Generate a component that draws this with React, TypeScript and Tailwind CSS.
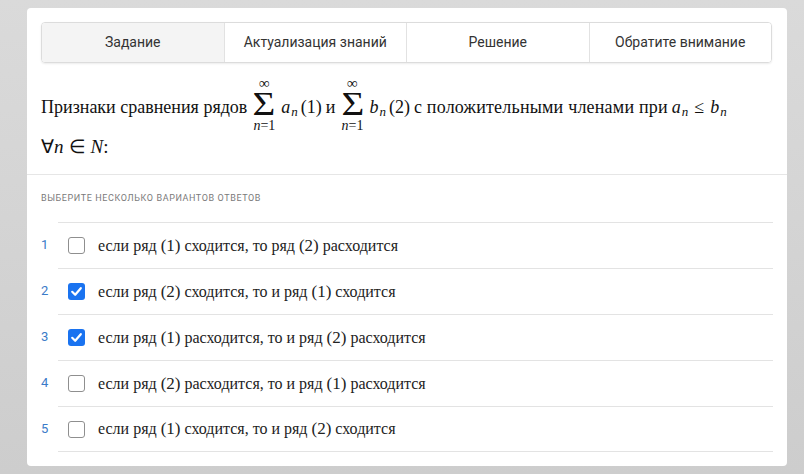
import React from "react";

const serif = { fontFamily: '"Liberation Serif", "Times New Roman", serif' };
const math = { fontFamily: '"Liberation Serif", serif' };
const sans = { fontFamily: 'Roboto, "Open Sans", sans-serif' };

function Sum() {
  return (
    <span className="inline-flex flex-col items-center mx-[2px] text-[#111] w-[30px] mt-[-4px]" style={math}>
      <span className="text-[15px] leading-[13px]">∞</span>
      <span className="text-[34px] leading-[28px] scale-x-[1.15] inline-block">Σ</span>
      <span className="text-[14px] leading-[15px]">
        <span className="italic">n</span>=1
      </span>
    </span>
  );
}

function Sub({ base }: { base: string }) {
  return (
    <span className="text-[18px] italic whitespace-nowrap" style={math}>
      {base}
      <span className="text-[13px] italic relative top-[3px] ml-[1px]">n</span>
    </span>
  );
}

function Check({ checked }: { checked: boolean }) {
  if (checked) {
    return (
      <span className="w-[17px] h-[17px] rounded-[3px] bg-[#1a73f0] flex items-center justify-center shrink-0">
        <svg width="13" height="13" viewBox="0 0 13 13">
          <path d="M2.2 6.8 L5.2 9.8 L10.8 3.2" fill="none" stroke="white" strokeWidth="2.2" strokeLinecap="round" strokeLinejoin="round" />
        </svg>
      </span>
    );
  }
  return <span className="w-[17px] h-[17px] rounded-[3px] border border-[#8f8f8f] bg-white shrink-0" />;
}

const options = [
  { t: ["если ряд ", "(1)", " сходится, то ряд ", "(2)", " расходится"], c: false },
  { t: ["если ряд ", "(2)", " сходится, то и ряд ", "(1)", " сходится"], c: true },
  { t: ["если ряд ", "(1)", " расходится, то и ряд ", "(2)", " расходится"], c: true },
  { t: ["если ряд ", "(2)", " расходится, то и ряд ", "(1)", " расходится"], c: false },
  { t: ["если ряд ", "(1)", " сходится, то и ряд ", "(2)", " сходится"], c: false },
];

export default function App() {
  const tabs = ["Задание", "Актуализация знаний", "Решение", "Обратите внимание"];
  return (
    <div className="w-[804px] h-[474px] bg-gradient-to-b from-[#dadada] to-[#cdcdcd] pt-[8px] pl-[27px]">
      <div className="w-[760px] h-[458px] bg-white rounded-[4px] flex flex-col">
        <div className="px-[14px] pt-[14px] pr-[15px]">
          <div className="h-[41px] flex border border-[#dcdcdc] rounded-[4px] shadow-[0_1px_2px_rgba(0,0,0,0.08)] overflow-hidden" style={sans}>
            {tabs.map((t, i) => (
              <div
                key={t}
                className={
                  "flex-1 flex items-center justify-center text-[14px] text-[#333] " +
                  (i === 0 ? "bg-[#f4f4f4] " : "bg-white ") +
                  (i > 0 ? "border-l border-[#e2e2e2]" : "")
                }
              >
                {t}
              </div>
            ))}
          </div>
        </div>

        <div className="px-[14px] pt-[15px] text-[18px] text-[#111]" style={serif}>
          <div className="flex items-center h-[58px] whitespace-nowrap">
            <span>Признаки сравнения рядов</span>
            <Sum />
            <Sub base="a" />
            <span className="text-[18px] ml-[3px]" style={math}>(1)</span>
            <span className="ml-[4px]">и</span>
            <Sum />
            <Sub base="b" />
            <span className="text-[18px] ml-[3px]" style={math}>(2)</span>
            <span className="ml-[4px] tracking-[0.2px]">с положительными членами при</span>
            <span className="ml-[4px]"><Sub base="a" /></span>
            <span className="text-[18px] mx-[6px]" style={math}>≤</span>
            <Sub base="b" />
          </div>
          <div className="h-[22px] flex items-center text-[19px]" style={math}>
            <span>∀</span><span className="italic">n</span>
            <span className="mx-[5px]">∈</span>
            <span className="italic">N</span><span>:</span>
          </div>
        </div>

        <div className="mt-[16px] border-t border-[#e6e6e6]" />

        <div className="px-[14px] pr-[14px]">
          <div className="pt-[17px] text-[9px] tracking-[0.6px] text-[#7a7a7a] uppercase leading-[12px]" style={sans}>
            Выберите несколько вариантов ответов
          </div>
          <div className="mt-[18px]">
            {options.map((o, i) => (
              <div key={i} className="flex items-stretch">
                <div className="w-[17px] flex items-center text-[13px] text-[#3a7bc8]" style={sans}>
                  {i + 1}
                </div>
                <div className={"flex-1 flex items-center h-[46px] border-t border-[#e3e3e3] pl-[10px] " + (i === options.length - 1 ? "border-b" : "")}>
                  <Check checked={o.c} />
                  <span className="ml-[13px] text-[16px] text-[#222]" style={serif}>
                    {o.t.map((p, j) =>
                      j % 2 === 1 ? (
                        <span key={j} className="text-[17px]" style={math}>{p}</span>
                      ) : (
                        <span key={j}>{p}</span>
                      )
                    )}
                  </span>
                </div>
              </div>
            ))}
          </div>
        </div>
      </div>
    </div>
  );
}
